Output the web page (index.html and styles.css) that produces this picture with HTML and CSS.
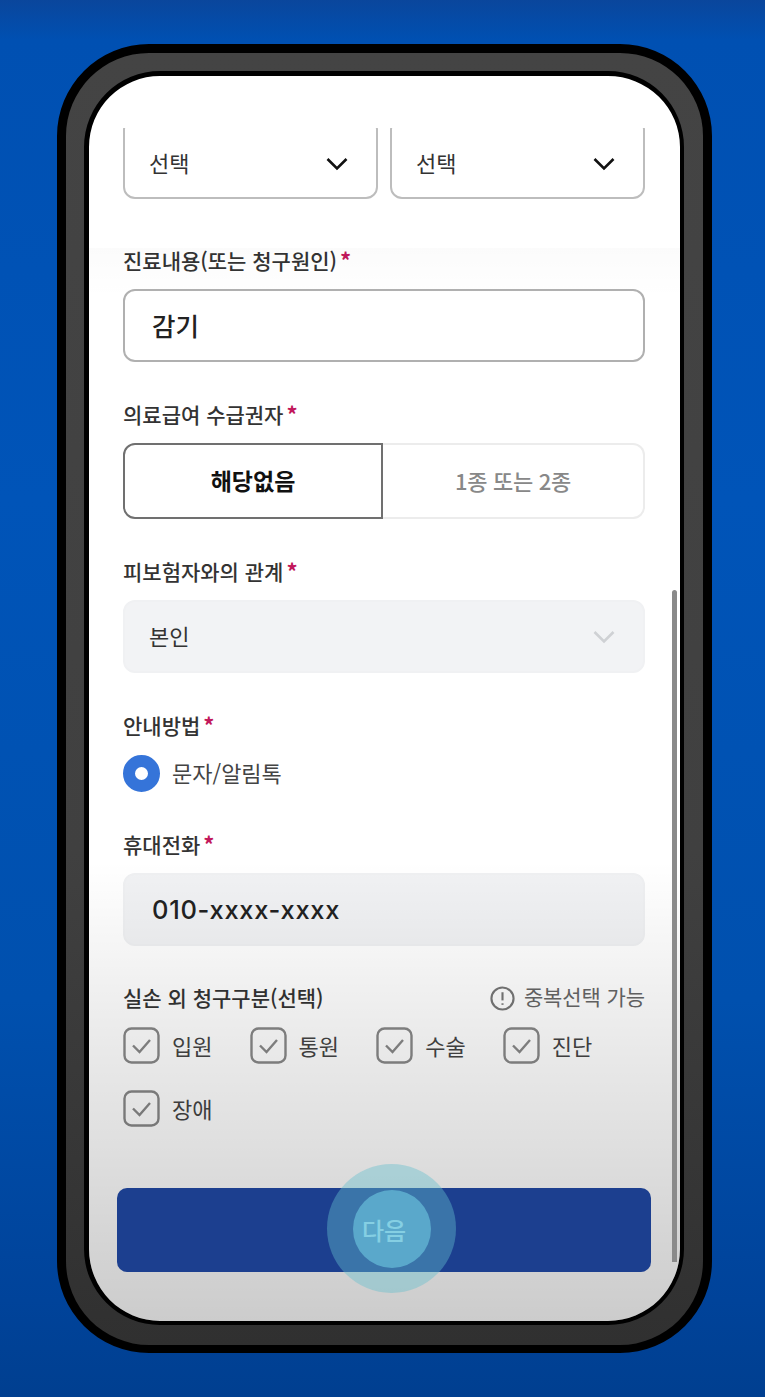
FILE: index.html
```html
<!DOCTYPE html>
<html lang="ko">
<head>
<meta charset="utf-8">
<title>청구 정보 입력</title>
<link rel="stylesheet" href="styles.css">
</head>
<body>
<div class="phone">
  <main class="screen">
    <div class="form">
      <div class="sel-row">
        <div class="select cut"><span>선택</span><svg class="chev" viewBox="0 0 22 14"><path d="M1.5 2 11 11.5 20.500 2"/></svg></div>
        <div class="select cut"><span>선택</span><svg class="chev" viewBox="0 0 22 14"><path d="M1.5 2 11 11.5 20.500 2"/></svg></div>
      </div>

      <section class="field first">
        <div class="label">진료내용(또는 청구원인)<i>*</i></div>
        <div class="input"><span>감기</span></div>
      </section>

      <section class="field">
        <div class="label">의료급여 수급권자<i>*</i></div>
        <div class="segment">
          <div class="seg on">해당없음</div>
          <div class="seg off">1종 또는 2종</div>
        </div>
      </section>

      <section class="field">
        <div class="label">피보험자와의 관계<i>*</i></div>
        <div class="select disabled"><span>본인</span><svg class="chev" viewBox="0 0 22 14"><path d="M1.5 2 11 11.5 20.500 2"/></svg></div>
      </section>

      <section class="field">
        <div class="label">안내방법<i>*</i></div>
        <div class="radio-row"><span class="radio"></span><span class="opt">문자/알림톡</span></div>
      </section>

      <section class="field">
        <div class="label">휴대전화<i>*</i></div>
        <div class="input filled"><span>010-xxxx-xxxx</span></div>
      </section>

      <section class="field">
        <div class="label-row">
          <div class="label">실손 외 청구구분(선택)</div>
          <div class="note">
            <svg class="info" viewBox="0 0 26 26"><circle cx="13" cy="13" r="11.500"/><path d="M13 6.500v8.500"/><path d="M13 18v1.600"/></svg>
            <span>중복선택 가능</span>
          </div>
        </div>
        <div class="checks">
          <div class="check"><svg class="box" viewBox="0 0 37 37"><rect x="1.500" y="1.500" width="34" height="34" rx="7"/><path d="M10 18.500l6.500 6.500L27 13"/></svg><span>입원</span></div>
          <div class="check"><svg class="box" viewBox="0 0 37 37"><rect x="1.500" y="1.500" width="34" height="34" rx="7"/><path d="M10 18.500l6.500 6.500L27 13"/></svg><span>통원</span></div>
          <div class="check"><svg class="box" viewBox="0 0 37 37"><rect x="1.500" y="1.500" width="34" height="34" rx="7"/><path d="M10 18.500l6.500 6.500L27 13"/></svg><span>수술</span></div>
          <div class="check"><svg class="box" viewBox="0 0 37 37"><rect x="1.500" y="1.500" width="34" height="34" rx="7"/><path d="M10 18.500l6.500 6.500L27 13"/></svg><span>진단</span></div>
          <div class="check"><svg class="box" viewBox="0 0 37 37"><rect x="1.500" y="1.500" width="34" height="34" rx="7"/><path d="M10 18.500l6.500 6.500L27 13"/></svg><span>장애</span></div>
        </div>
      </section>

      <button class="next" type="button"><span>다음</span></button>
    </div>
    <div class="band"></div>
    <div class="shade"></div>
    <div class="scrollbar"></div>
    <div class="touch"><div class="touch-core"></div></div>
  </main>
</div>
</body>
</html>
```

FILE: styles.css
```css
* { box-sizing: border-box; }
html, body { margin: 0; height: 100%; }
body {
  width: 765px;
  height: 1397px;
  padding: 44px 53px 44px 57px;
  overflow: hidden;
  background: linear-gradient(180deg, #0a469c 0, #0050b2 40px, #0054b8 500px, #0050ae 1000px, #00439a 1300px, #003f90 1397px);
  font-family: "Noto Sans CJK KR", "Noto Sans", sans-serif;
  color: #333;
}
.phone {
  width: 655px;
  height: 1309px;
  border: 9px solid #000;
  border-bottom-width: 8px;
  border-radius: 92px;
  padding: 18px 19px 20px 18px;
  background: linear-gradient(180deg, #444 0, #404040 800px, #303030 100%);
}
.screen {
  position: relative;
  height: 100%;
  border: 5px solid #000;
  border-bottom-width: 4px;
  border-right-width: 4px;
  border-radius: 76px;
  overflow: hidden;
  background: #fff;
}
.form {
  padding: 52px 35px 0 34px;
}
.sel-row {
  display: flex;
  gap: 12px;
  height: 71px;
  overflow: hidden;
}
.select {
  flex: 1;
  display: flex;
  align-items: center;
  justify-content: space-between;
  height: 73px;
  padding: 0 28px 0 24px;
  border: 2px solid #bdbdbd;
  border-radius: 12px;
  font-size: 22px;
}
.select span { padding-bottom: 4px; }
.select.cut {
  height: 81px;
  margin-top: -10px;
  padding-top: 10px;
}
.chev {
  width: 22px;
  height: 14px;
  fill: none;
  stroke: #111;
  stroke-width: 2.600;
}
.select.disabled {
  background: #f2f3f5;
  border-color: #f0f1f3;
}
.select.disabled .chev { stroke: #cfd1d4; }
.field { margin-top: 39px; }
.field.first { margin-top: 48px; }
.label {
  height: 28px;
  margin-bottom: 14px;
  font-size: 21px;
  line-height: 25px;
  font-weight: 500;
  color: #333;
  white-space: nowrap;
}
.label i {
  margin-left: 3px;
  font-size: 22px;
  font-weight: 700;
  font-style: normal;
  color: #c2185b;
}
.input {
  display: flex;
  align-items: center;
  height: 73px;
  padding: 0 27px;
  border: 2px solid #b0b0b0;
  border-radius: 12px;
  font-family: Inter, "Noto Sans CJK KR", sans-serif;
  font-size: 25.500px;
  font-weight: 500;
  color: #222;
}
.input span { padding-bottom: 3px; }
.input.filled {
  background: #f1f2f4;
  border-color: #eff0f2;
}
.input.filled span {
  padding-bottom: 1px;
  letter-spacing: .7px;
}
.segment {
  display: flex;
  height: 76px;
}
.seg {
  display: flex;
  align-items: center;
  justify-content: center;
  padding-bottom: 2px;
  font-size: 22px;
  letter-spacing: -0.3px;
}
.seg.on {
  flex: 0 0 260px;
  border: 2px solid #707070;
  border-radius: 12px 0 0 12px;
  font-size: 23px;
  letter-spacing: 0;
  font-weight: 700;
  color: #111;
}
.seg.off {
  flex: 1;
  border: 2px solid #ececec;
  border-left: 0;
  border-radius: 0 12px 12px 0;
  font-weight: 500;
  color: #888;
}
.radio-row {
  display: flex;
  align-items: center;
  gap: 12px;
  height: 37px;
  margin-top: 15px;
}
.radio {
  width: 37px;
  height: 37px;
  border: 12px solid #3574d9;
  border-radius: 50%;
  background: #fff;
}
.opt {
  padding-bottom: 3px;
  font-size: 22px;
  color: #444;
}
.check span {
  padding-bottom: 2px;
  font-size: 22px;
  color: #444;
}
.label-row {
  display: flex;
  justify-content: space-between;
  align-items: flex-start;
  margin-bottom: 14px;
}
.label-row .label { margin-bottom: 0; }
.note {
  display: flex;
  align-items: center;
  gap: 9px;
  height: 26px;
  font-size: 21px;
  letter-spacing: -0.1px;
  color: #666;
}
.note span { padding-bottom: 4px; }
.info {
  width: 25px;
  height: 25px;
  fill: none;
  stroke: #777;
  stroke-width: 2.200;
}
.checks {
  display: flex;
  flex-wrap: wrap;
  gap: 26px 0;
}
.check {
  display: flex;
  align-items: center;
  gap: 12px;
  width: 126.600px;
  height: 37px;
}
.box {
  width: 37px;
  height: 37px;
  fill: none;
  stroke: #888;
  stroke-width: 2.400;
}
.next {
  position: relative;
  z-index: 2;
  display: block;
  width: 534px;
  height: 84px;
  margin: 61px 0 0 -6px;
  padding: 0 0 2px;
  border: 0;
  border-radius: 10px;
  background: #1c3f8f;
  color: #dcf0fa;
  font-family: inherit;
  font-size: 24px;
  font-weight: 500;
}
.band {
  position: absolute;
  left: 0;
  right: 0;
  top: 172px;
  height: 50px;
  background: linear-gradient(180deg, rgba(0,0,0,.014), rgba(0,0,0,0));
  pointer-events: none;
}
.shade {
  position: absolute;
  left: 0;
  right: 0;
  bottom: 0;
  height: 460px;
  background: linear-gradient(180deg, rgba(0,0,0,0) 0, rgba(0,0,0,.075) 35%, rgba(0,0,0,.2) 100%);
  pointer-events: none;
}
.scrollbar {
  position: absolute;
  right: 3px;
  top: 514px;
  width: 5px;
  height: 672px;
  border-radius: 3px 3px 0 0;
  background: #8a8a8a;
}
.touch {
  position: absolute;
  z-index: 3;
  left: 238px;
  top: 1088px;
  width: 129px;
  height: 129px;
  display: flex;
  align-items: center;
  justify-content: center;
  border-radius: 50%;
  background: rgba(100, 190, 205, .42);
}
.touch-core {
  width: 78px;
  height: 78px;
  border-radius: 50%;
  background: rgba(110, 200, 225, .62);
}
```
